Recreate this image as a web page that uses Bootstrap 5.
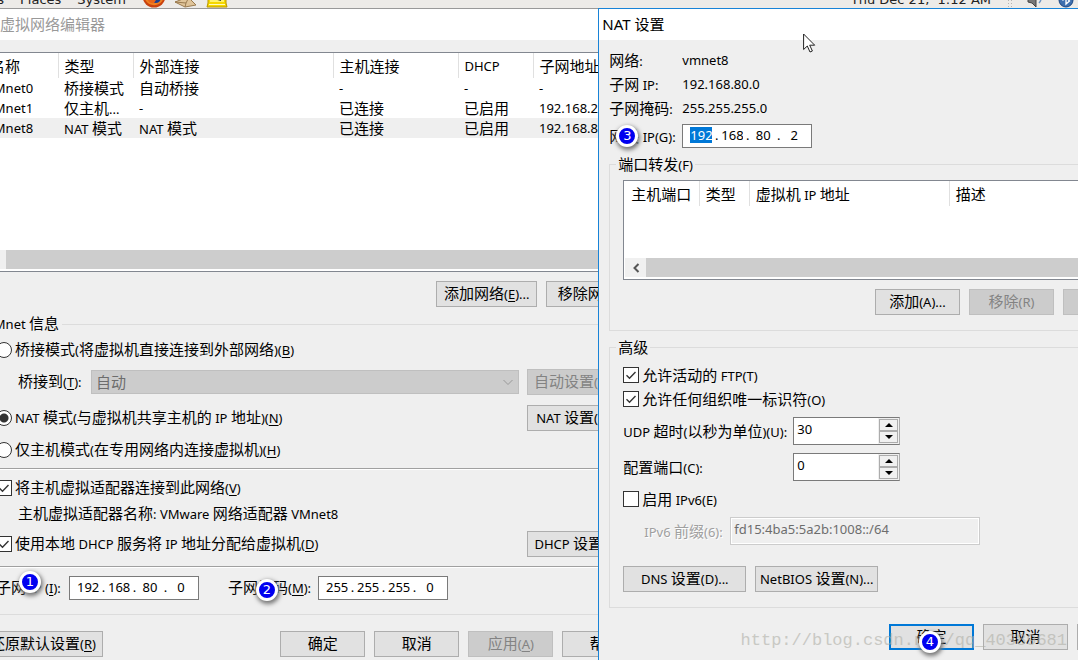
<!DOCTYPE html>
<html lang="zh-CN">
<head>
<meta charset="utf-8">
<meta name="viewport" content="width=device-width, initial-scale=1">
<title>虚拟网络编辑器</title>
<link href="https://cdn.jsdelivr.net/npm/bootstrap@5.3.0/dist/css/bootstrap.min.css" rel="stylesheet">
<style>
  :root { --face: #efefef; --edge: #adadad; --line: #dcdcdc; --accent: #0078d7; }
  body {
    font-family: "Noto Sans", "Noto Sans CJK SC", sans-serif;
    font-size: 15px; line-height: 20px; color: #000; background: var(--face);
  }
  label, legend, .cjk, .btn, td, th { white-space: nowrap; }
  .lat { font-size: 13px; }
  u { text-underline-offset: 2px; }

  /* desktop panel, mostly above the top edge */
  .desk-panel { height: 8px; background: #edebe8; font: 13px/16px "DejaVu Sans", sans-serif; padding-right: 4px; }
  .desk-panel a { color: #222; text-decoration: none; }
  .desk-panel svg { flex: none; }
  .desk-panel .first { margin-left: -84px; width: 88px; text-align: right; }
  .desk-panel .clock { white-space: pre; }
  .desk-panel .tray { gap: 14px; padding-left: 16px; }
  .grip { width: 5px; height: 12px; background: radial-gradient(circle, #b5b3b0 1px, transparent 1px) 0 0 / 3px 3px; }

  .workspace { display: grid; grid-template-columns: 55.5% minmax(0, 1fr); }
  .win { border-top: 1px solid #999; background: var(--face); }
  .win-nat { border-top-color: #1883d7; border-left: 1px solid #1883d7; }
  .win-title { height: 31px; line-height: 31px; background: #fff; font-size: 15px; font-weight: 400; margin: 0; }
  .editor-sheet { margin-left: -28px; margin-right: -60px; }
  .editor-sheet .win-title { padding-left: 28px; color: #999; }
  .nat-sheet { margin-right: -95px; }
  .nat-sheet .win-title { padding-left: 3px; }
  .win-body { padding: 12px 11px 0; }
  .win-nat .win-body { padding: 8px 11px 0 10px; }

  .list-box { border: 1px solid #828790; background: #fff; display: flex; flex-direction: column; justify-content: space-between; padding: 0 1px 1px; }
  .list-box table { table-layout: fixed; width: 100%; margin: 0; line-height: 18px; }
  .list-box th { font-weight: 400; height: 25px; padding: 0 0 0 6px; border-right: 1px solid #e0e0e0; overflow: hidden; }
  .list-box td { height: 20px; padding: 0 0 0 6px; overflow: hidden; }
  .list-box td .lat, .list-box th .lat { line-height: 16px; }
  .list-box tr.picked td { background: var(--face); }
  .editor-list td:first-child { padding-left: 1px; }
  .editor-list th:first-child { padding-left: 5px; }
  .col-s { width: 50px; } .col-n { width: 73px; } .col-m { width: 75px; } .col-l { width: 125px; } .col-x { width: 200px; }
  .scroll-x { height: 20px; background: #f0f0f0; border-bottom: 1px solid #fff; display: flex; }
  .scroll-x button { width: 21px; border: 0; padding: 0; background: none; display: flex; align-items: center; justify-content: center; }
  .scroll-x span { flex: 1; background: #cdcdcd; }
  .editor-list { height: 220px; }
  .nat-list { height: 100px; margin: 4px 0 9px; }
  .nat-list .col-m { width: 74px; }

  fieldset { border: 1px solid var(--line); min-width: 0; }
  legend { float: none; width: auto; margin: 0 0 0 -7px; padding: 0 2px; font-size: 15px; line-height: 24px; height: 24px; }
  .editor-set { padding: 0 10px 14px 12px; }
  .editor-set legend { margin-left: -10px; padding: 0 3px 2px 0; line-height: 22px; }
  .editor-set label, .editor-set .cjk { padding-bottom: 2px; }
  .nat-set { padding: 0 13px 15px 13px; }
  .nat-set + .nat-set { margin-top: 4px; }
  .line-row { display: flex; align-items: center; min-height: 24px; }
  .line-row label { padding-left: 3px; flex: none; }
  .line-row label.plain { padding-left: 0; }
  .line-row.inset { padding-left: 22px; }
  .row-top { margin: 2px 0 7px; }
  .row-nat { margin: 10px 0 7px; }
  .row-name { margin: 2px 0 5px; }
  .row-gw { margin: 4px 0; }
  .row-udp { margin: 6px 0 8px; }
  .row-port { margin-bottom: 6px; }
  .row-prefix { margin: 6px 0 21px; }
  .row-prefix label.plain { padding-left: 21px; }
  .label-gap { margin-left: 29px; }
  .rule { height: 2px; background: #fff; border-top: 1px solid #a0a0a0; margin: 6px -6px; }
  .rule.wide { margin-top: 9px; margin-bottom: 8px; }

  .btn-bar { display: flex; gap: 9px; }
  .bar-net { padding: 9px 0 5px; }
  .bar-end { padding: 16px 0 11px; }
  .btn-win {
    --bs-btn-color: #000; --bs-btn-bg: #e1e1e1; --bs-btn-border-color: var(--edge);
    --bs-btn-hover-bg: #e5f1fb; --bs-btn-hover-color: #000; --bs-btn-hover-border-color: var(--accent);
    --bs-btn-disabled-color: #838383; --bs-btn-disabled-bg: #ccc; --bs-btn-disabled-border-color: #bfbfbf; --bs-btn-disabled-opacity: 1;
    --bs-btn-border-radius: 0; --bs-btn-padding-x: 0; --bs-btn-padding-y: 0;
    font-size: 15px; line-height: 22px; padding-bottom: 2px; height: 26px; width: 85px; flex: none;
  }
  .w-101 { width: 101px; } .w-109 { width: 109px; } .w-120 { width: 120px; } .w-123 { width: 123px; }
  .btn-main { border: 2px solid var(--accent); line-height: 20px; }

  .tick.form-check-input { width: 16px; height: 16px; margin: 0; flex: none; background-color: #fff; border: 1px solid #333; background-size: 14px 14px; }
  .tick[type=checkbox] { border-radius: 0; }
  .tick.form-check-input:checked { background-color: #fff; border-color: #333; }
  .tick[type=checkbox]:checked { background-image: url("data:image/svg+xml,%3csvg xmlns='http://www.w3.org/2000/svg' viewBox='0 0 14 14'%3e%3cpath d='M2.5 7.2l3 3 6-6.2' fill='none' stroke='%23333' stroke-width='1.4'/%3e%3c/svg%3e"); }
  .tick[type=radio]:checked { background-image: radial-gradient(circle, #333 4px, transparent 5px); }

  .bridge.form-select { height: 24px; padding: 0 24px 0 4px; border: 1px solid #bfbfbf; border-radius: 0; font-size: 15px; line-height: 20px; color: #6d6d6d; background-color: #ccc; background-position: right 4px center; background-size: 12px 12px; min-width: 0;
    background-image: url("data:image/svg+xml,%3csvg xmlns='http://www.w3.org/2000/svg' viewBox='0 0 12 12'%3e%3cpath d='M1.5 4l4.500 4.500 4.500-4.500' fill='none' stroke='%23999'/%3e%3c/svg%3e"); }

  .ip-box { width: 130px; height: 24px; border: 1px solid #7a7a7a; background: #fff; display: flex; align-items: center; padding: 0 6px 2px 7px; flex: none; font-size: 13px; }
  .ip-box input { width: 22px; height: 16px; border: 0; padding: 0; text-align: center; font-size: 13px; line-height: 16px; outline: 0; background: none; color: #000; }
  .ip-box input.sel { background: var(--accent); color: #fff; }
  .ip-box span { width: 9px; text-align: center; }

  .w-73 { width: 73px; } .w-90 { width: 90px; } .w-107 { width: 107px; } .w-170 { width: 170px; }
  .spin { width: 107px; height: 28px; border: 1px solid #7a7a7a; border-right-color: #adadad; background: #fff; display: flex; }
  .spin input { flex: 1; min-width: 0; border: 0; outline: 0; padding: 0 3px 4px; font-size: 13px; appearance: textfield; -moz-appearance: textfield; }
  .spin input::-webkit-inner-spin-button { appearance: none; }
  .spin-keys { width: 21px; display: flex; flex-direction: column; padding: 1px; background: var(--face); }
  .spin-keys button { flex: 1; border: 1px solid #acacac; background: #f0f0f0; padding: 0; display: flex; align-items: center; justify-content: center; }
  .prefix { width: 250px; height: 28px; border: 1px solid #ccc; padding: 0 3px 4px; box-shadow: inset 0 0 0 1px #fff; background: var(--face); color: #6d6d6d; font-size: 13px; }
  .faded { color: #a0a0a0; text-shadow: 1px 1px #fff; }

  /* numbered step pins lying over the labels */
  .pin { position: absolute; width: 22px; height: 22px; border: 3px solid #fff; border-radius: 50%; background: #0000f0; color: #fff; font: 13px/16px "DejaVu Sans", sans-serif; text-align: center; box-shadow: 1px 2px 4px 1px #777; z-index: 2; }
  .pin-1 { left: 23px; top: -6px; }
  .pin-2 { left: 28px; top: 2px; }
  .pin-3 { left: 7px; top: 1px; }
  .pin-4 { left: 28px; top: 5px; }
  .pointer { position: absolute; left: 204px; top: 24px; }
  .watermark { position: absolute; right: 95px; top: 21px; font: 17px/24px "Liberation Mono", monospace; color: #b0b0a8; opacity: .6; pointer-events: none; z-index: 1; }
</style>
</head>
<body class="overflow-hidden">
<nav class="desk-panel d-flex align-items-end overflow-hidden">
  <a href="#" class="first me-3">Applications</a>
  <a href="#">Places</a>
  <a href="#" class="ms-3">System</a>
  <div class="d-flex align-items-end gap-2 ms-3">
    <svg width="24" height="24" viewBox="0 0 24 24"><circle cx="12" cy="12" r="11.500" fill="#c9420f"/><path d="M2 8C1 18 8 22 14 21c6-1 9-7 8-13-2 6-5 9-9 8-4 1-7-3-7-8z" fill="#f08020"/><path d="M6 5c-1 8 2 14 8 14 4 0 6-4 6-12z" fill="#1b3f91"/><path d="M5 14c3 3 6 0 9 2l-2 3c-3 1-6-1-7-5z" fill="#e8641b"/></svg>
    <svg width="24" height="24" viewBox="0 0 24 24"><path d="M1 18l13-5 8 8-11 2z" fill="#dfc49a" stroke="#9a7b50"/><path d="M1 18l11 1 3-6M12 19l-1 4" fill="none" stroke="#9a7b50"/></svg>
    <svg width="22" height="24" viewBox="0 0 22 24"><path d="M2 1h18v18l1 4H1l1-4z" fill="#f6d800" stroke="#b89400"/><path d="M4 5h14v13H4z" fill="#fff36b"/><path d="M8 15l7 2v-3z" fill="#333"/><path d="M3 20.500h16" stroke="#fffbc0"/></svg>
  </div>
  <a href="#" class="ms-auto clock">Thu Dec 21,  1:12 AM</a>
  <div class="d-flex align-items-end tray">
    <span class="grip"></span>
    <svg width="18" height="20" viewBox="0 0 18 20"><path d="M2 9l5 1 3-4v13l-4-4-4-1z" fill="#777" stroke="#444"/><path d="M13 8c3 2 2 5 0 7" fill="none" stroke="#6f96c4" stroke-width="1.500"/></svg>
    <svg width="16" height="22" viewBox="0 0 16 22"><rect x="1" y="1" width="14" height="20" rx="7" fill="#3e6fae" stroke="#1d4680"/><path d="M4.500 8l7 7L8 18V4l3.500 3.500-7 7" fill="none" stroke="#fff" stroke-width="1.300"/></svg>
  </div>
</nav>

<div class="workspace">
  <main class="win overflow-hidden">
    <div class="editor-sheet">
      <h1 class="win-title">虚拟网络编辑器</h1>
      <div class="win-body">
        <div class="list-box editor-list">
          <table>
            <colgroup><col class="col-n"><col class="col-m"><col class="col-x"><col class="col-l"><col class="col-m"><col></colgroup>
            <thead><tr><th>名称</th><th>类型</th><th>外部连接</th><th>主机连接</th><th class="lat">DHCP</th><th>子网地址</th></tr></thead>
            <tbody>
              <tr><td class="lat">VMnet0</td><td>桥接模式</td><td>自动桥接</td><td class="lat">-</td><td class="lat">-</td><td class="lat">-</td></tr>
              <tr><td class="lat">VMnet1</td><td>仅主机<span class="lat">...</span></td><td class="lat">-</td><td>已连接</td><td>已启用</td><td class="lat">192.168.233.0</td></tr>
              <tr class="picked"><td class="lat">VMnet8</td><td><span class="lat">NAT </span>模式</td><td><span class="lat">NAT </span>模式</td><td>已连接</td><td>已启用</td><td class="lat">192.168.80.0</td></tr>
            </tbody>
          </table>
          <div class="scroll-x"><button type="button" aria-label="向左滚动"><svg width="8" height="10" viewBox="0 0 8 10"><path d="M6 1L2 5l4 4" fill="none" stroke="#555" stroke-width="2"/></svg></button><span></span></div>
        </div>
        <div class="btn-bar bar-net justify-content-end">
          <button class="btn btn-win w-101">添加网络<span class="lat">(<u>E</u>)...</span></button>
          <button class="btn btn-win w-101">移除网络<span class="lat">(<u>O</u>)</span></button>
        </div>
        <fieldset class="editor-set">
          <legend><span class="lat">VMnet </span>信息</legend>
          <div class="line-row row-top"><input class="form-check-input tick" type="radio" name="mode" id="m1"><label for="m1">桥接模式<span class="lat">(</span>将虚拟机直接连接到外部网络<span class="lat">)(<u>B</u>)</span></label></div>
          <div class="line-row inset"><label for="br" class="plain w-73">桥接到<span class="lat">(<u>T</u>):</span></label>
            <select class="form-select bridge flex-grow-1" id="br" disabled><option>自动</option></select>
            <button class="btn btn-win w-109 ms-2 pe-2" disabled>自动设置<span class="lat">(<u>U</u>)...</span></button></div>
          <div class="line-row row-nat"><input class="form-check-input tick" type="radio" name="mode" id="m2" checked><label for="m2"><span class="lat">NAT </span>模式<span class="lat">(</span>与虚拟机共享主机的<span class="lat"> IP </span>地址<span class="lat">)(<u>N</u>)</span></label>
            <button class="btn btn-win w-109 ms-auto pe-2"><span class="lat">NAT </span>设置<span class="lat">(<u>S</u>)...</span></button></div>
          <div class="line-row"><input class="form-check-input tick" type="radio" name="mode" id="m3"><label for="m3">仅主机模式<span class="lat">(</span>在专用网络内连接虚拟机<span class="lat">)(<u>H</u>)</span></label></div>
          <div class="rule"></div>
          <div class="line-row"><input class="form-check-input tick" type="checkbox" id="c1" checked><label for="c1">将主机虚拟适配器连接到此网络<span class="lat">(<u>V</u>)</span></label></div>
          <div class="line-row inset row-name cjk"><span>主机虚拟适配器名称<span class="lat">: VMware </span>网络适配器<span class="lat"> VMnet8</span></span></div>
          <div class="line-row"><input class="form-check-input tick" type="checkbox" id="c2" checked><label for="c2">使用本地<span class="lat"> DHCP </span>服务将<span class="lat"> IP </span>地址分配给虚拟机<span class="lat">(<u>D</u>)</span></label>
            <button class="btn btn-win w-109 ms-auto"><span class="lat">DHCP </span>设置<span class="lat">(<u>P</u>)...</span></button></div>
          <div class="rule wide"></div>
          <div class="line-row">
            <label for="ip1" class="plain w-73 position-relative">子网<span class="lat"> IP (<u>I</u>):</span><span class="pin pin-1">1</span></label>
            <div class="ip-box"><input id="ip1" value="192"><span>.</span><input aria-label="2" value="168"><span>.</span><input aria-label="3" value="80"><span>.</span><input aria-label="4" value="0"></div>
            <label for="mk1" class="plain w-90 label-gap position-relative">子网掩码<span class="lat">(<u>M</u>):</span><span class="pin pin-2">2</span></label>
            <div class="ip-box"><input id="mk1" value="255"><span>.</span><input aria-label="2" value="255"><span>.</span><input aria-label="3" value="255"><span>.</span><input aria-label="4" value="0"></div>
          </div>
        </fieldset>
        <div class="btn-bar bar-end">
          <button class="btn btn-win w-120 me-auto">还原默认设置<span class="lat">(<u>R</u>)</span></button>
          <button class="btn btn-win">确定</button>
          <button class="btn btn-win">取消</button>
          <button class="btn btn-win" disabled>应用<span class="lat">(<u>A</u>)</span></button>
          <button class="btn btn-win">帮助</button>
        </div>
      </div>
    </div>
  </main>

  <section class="win win-nat overflow-hidden position-relative">
    <svg class="pointer" width="13" height="20" viewBox="0 0 13 20"><path d="M.6 1v15.500l3.700-3.500 2.700 6 2.400-1-2.700-5.800h5z" fill="#fff" stroke="#222"/></svg>
    <div class="nat-sheet">
      <h2 class="win-title">NAT 设置</h2>
      <div class="win-body">
        <div class="line-row cjk"><span class="w-73">网络<span class="lat">:</span></span><span class="lat">vmnet8</span></div>
        <div class="line-row cjk"><span class="w-73">子网<span class="lat"> IP:</span></span><span class="lat">192.168.80.0</span></div>
        <div class="line-row cjk"><span class="w-73">子网掩码<span class="lat">:</span></span><span class="lat">255.255.255.0</span></div>
        <div class="line-row row-gw position-relative"><label for="gw" class="plain w-73">网关<span class="lat"> IP(G):</span></label><span class="pin pin-3">3</span>
          <div class="ip-box"><input class="sel" id="gw" value="192"><span>.</span><input aria-label="2" value="168"><span>.</span><input aria-label="3" value="80"><span>.</span><input aria-label="4" value="2"></div></div>
        <fieldset class="nat-set">
          <legend>端口转发<span class="lat">(F)</span></legend>
          <div class="list-box nat-list">
            <table>
              <colgroup><col class="col-m"><col class="col-s"><col class="col-x"><col></colgroup>
              <thead><tr><th>主机端口</th><th>类型</th><th>虚拟机<span class="lat"> IP </span>地址</th><th>描述</th></tr></thead>
            </table>
            <div class="scroll-x"><button type="button" aria-label="向左滚动"><svg width="8" height="10" viewBox="0 0 8 10"><path d="M6.500 1l-4 4 4 4" fill="none" stroke="#555" stroke-width="2"/></svg></button><span></span></div>
          </div>
          <div class="btn-bar justify-content-end">
            <button class="btn btn-win">添加<span class="lat">(A)...</span></button>
            <button class="btn btn-win" disabled>移除<span class="lat">(R)</span></button>
            <button class="btn btn-win" disabled>属性<span class="lat">(P)</span></button>
          </div>
        </fieldset>
        <fieldset class="nat-set">
          <legend>高级</legend>
          <div class="line-row mt-1"><input class="form-check-input tick" type="checkbox" id="d1" checked><label for="d1">允许活动的<span class="lat"> FTP(T)</span></label></div>
          <div class="line-row"><input class="form-check-input tick" type="checkbox" id="d2" checked><label for="d2">允许任何组织唯一标识符<span class="lat">(O)</span></label></div>
          <div class="line-row row-udp"><label for="udp" class="plain w-170"><span class="lat">UDP </span>超时<span class="lat">(</span>以秒为单位<span class="lat">)(U):</span></label>
            <div class="spin"><input id="udp" type="number" value="30"><div class="spin-keys"><button type="button" aria-label="增加"><svg width="8" height="4"><path d="M0 4l4-4 4 4z"/></svg></button><button type="button" aria-label="减少"><svg width="8" height="4"><path d="M0 0l4 4 4-4z"/></svg></button></div></div></div>
          <div class="line-row row-port"><label for="port" class="plain w-170">配置端口<span class="lat">(C):</span></label>
            <div class="spin"><input id="port" type="number" value="0"><div class="spin-keys"><button type="button" aria-label="增加"><svg width="8" height="4"><path d="M0 4l4-4 4 4z"/></svg></button><button type="button" aria-label="减少"><svg width="8" height="4"><path d="M0 0l4 4 4-4z"/></svg></button></div></div></div>
          <div class="line-row"><input class="form-check-input tick" type="checkbox" id="d3"><label for="d3">启用<span class="lat"> IPv6(E)</span></label></div>
          <div class="line-row row-prefix"><label for="pf" class="plain w-107 faded"><span class="lat">IPv6 </span>前缀<span class="lat">(6):</span></label><input class="prefix" id="pf" value="fd15:4ba5:5a2b:1008::/64" disabled></div>
          <div class="btn-bar">
            <button class="btn btn-win w-123"><span class="lat">DNS </span>设置<span class="lat">(D)...</span></button>
            <button class="btn btn-win w-123"><span class="lat">NetBIOS </span>设置<span class="lat">(N)...</span></button>
          </div>
        </fieldset>
        <div class="btn-bar bar-end justify-content-end position-relative">
          <button class="btn btn-win btn-main position-relative">确定<span class="pin pin-4">4</span></button>
          <button class="btn btn-win">取消</button>
          <button class="btn btn-win">帮助</button>
          <div class="watermark">http://blog.csdn.net/qq_40389681</div>
        </div>
      </div>
    </div>
  </section>
</div>
<script src="https://cdn.jsdelivr.net/npm/bootstrap@5.3.0/dist/js/bootstrap.bundle.min.js"></script>
</body>
</html>
